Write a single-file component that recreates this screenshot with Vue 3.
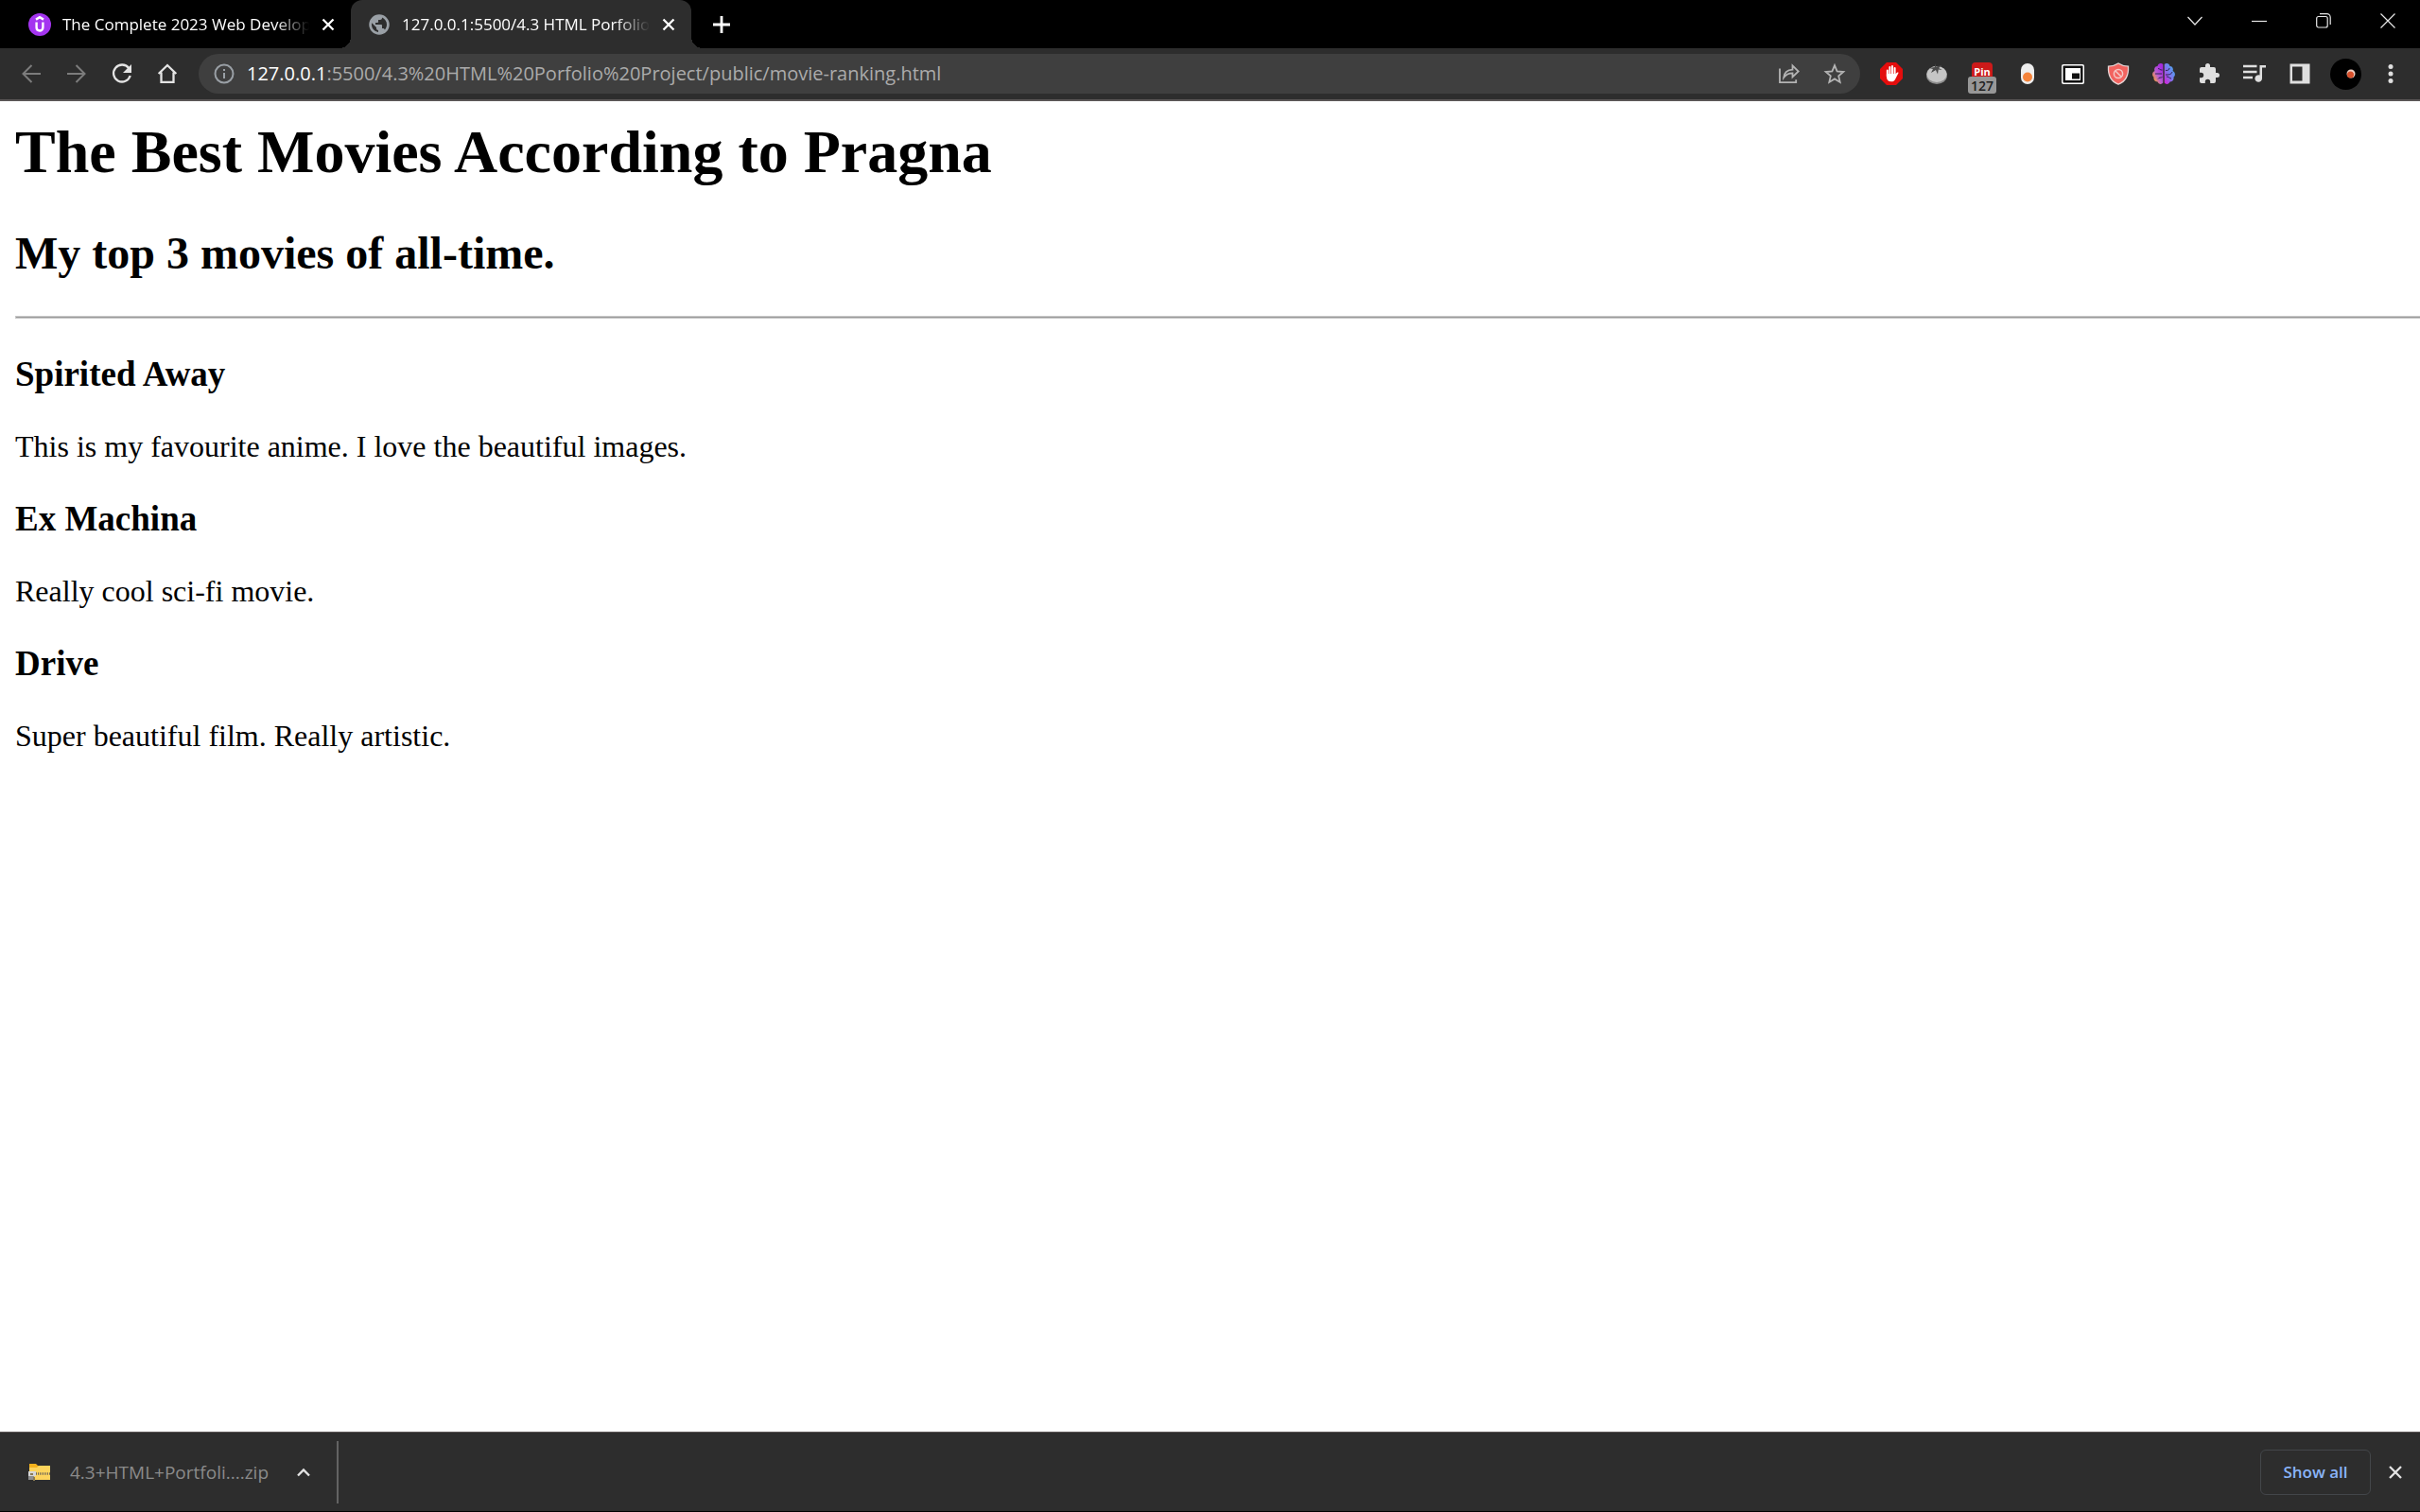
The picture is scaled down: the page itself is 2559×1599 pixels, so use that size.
<script setup>
const tabs = [
  { title: 'The Complete 2023 Web Develop', icon: 'course', active: false },
  { title: '127.0.0.1:5500/4.3 HTML Porfolio', icon: 'globe', active: true },
]
const movies = [
  { title: 'Spirited Away', text: 'This is my favourite anime. I love the beautiful images.' },
  { title: 'Ex Machina', text: 'Really cool sci-fi movie.' },
  { title: 'Drive', text: 'Super beautiful film. Really artistic.' },
]
</script>

<template>
  <div class="browser">
    <header>
      <div class="tabstrip">
        <div v-for="tab in tabs" :key="tab.icon" class="tab" :class="{ active: tab.active }">
          <svg v-if="tab.icon === 'course'" class="favicon" viewBox="0 0 24 24">
            <circle cx="12" cy="12" r="12" fill="#a435f0" />
            <path d="M8 6.600 12 4.200l4 2.400M8.600 9.500v5.500c0 4.600 6.800 4.600 6.800 0V9.500" fill="none" stroke="#fff" stroke-width="2.400" />
          </svg>
          <svg v-else class="favicon" viewBox="0 0 24 24">
            <circle cx="12" cy="12" r="10" fill="none" stroke="#9aa0a6" stroke-width="1.500" />
            <path d="M12 2C6.480 2 2 6.480 2 12s4.480 10 10 10 10-4.480 10-10S17.520 2 12 2zm-1 17.930c-3.950-.490-7-3.850-7-7.930 0-.620.080-1.210.210-1.790L9 15v1c0 1.100.9 2 2 2v1.930zm6.900-2.540c-.260-.810-1-1.390-1.900-1.390h-1v-3c0-.550-.450-1-1-1H8v-2h2c.550 0 1-.450 1-1V7h2c1.100 0 2-.9 2-2v-.410c2.930 1.190 5 4.060 5 7.410 0 2.080-.8 3.970-2.100 5.390z" fill="#9aa0a6" />
          </svg>
          <span class="tab-title">{{ tab.title }}</span>
          <button class="tab-close" aria-label="Close tab">
            <svg width="14" height="14" viewBox="0 0 14 14"><path d="M1.500 1.500l11 11M12.500 1.500l-11 11" stroke="#fff" stroke-width="2.300" /></svg>
          </button>
        </div>
        <button class="new-tab" aria-label="New tab">
          <svg width="18" height="18" viewBox="0 0 18 18"><path d="M9 0v18M0 9h18" stroke="#fff" stroke-width="2.800" /></svg>
        </button>
        <div class="window-controls">
          <button aria-label="Search tabs"><svg width="16" height="16" viewBox="0 0 16 16"><path d="M.5 4 8 12l7.500-8" /></svg></button>
          <button aria-label="Minimize"><svg width="16" height="16" viewBox="0 0 16 16"><path d="M0 8.500h16" /></svg></button>
          <button aria-label="Restore"><svg width="16" height="16" viewBox="0 0 16 16"><rect x=".7" y="3.500" width="11.500" height="11.500" rx="2" /><path d="M4 .7h7.500a3.700 3.700 0 0 1 3.700 3.700V12" /></svg></button>
          <button aria-label="Close"><svg width="16" height="16" viewBox="0 0 16 16"><path d="M.5.5l15 15M15.500.5l-15 15" /></svg></button>
        </div>
      </div>

      <div class="toolbar">
        <nav class="nav">
          <button aria-label="Back"><svg class="dim" viewBox="0 0 24 24"><path d="M22 12H3.500M12.500 3l-9 9 9 9" /></svg></button>
          <button aria-label="Forward"><svg class="dim" viewBox="0 0 24 24"><path d="M2 12h18.500M11.500 3l9 9-9 9" /></svg></button>
          <button aria-label="Reload"><svg viewBox="0 0 24 24"><path d="M19.200 6A9 9 0 1 0 20.700 14" /><path d="M22 2v9h-9z" fill="#e4e4e4" stroke="none" /></svg></button>
          <button aria-label="Home"><svg viewBox="0 0 24 24"><path d="M5.500 10.500v10.300h13V10.500M2.700 12 12 3l9.300 9" /></svg></button>
        </nav>
        <div class="omnibox">
          <svg class="info" viewBox="0 0 24 24"><circle cx="12" cy="12" r="9.500" /><path d="M12 11v6M12 7v2" /></svg>
          <span class="url"><b>127.0.0.1</b>:5500/4.3%20HTML%20Porfolio%20Project/public/movie-ranking.html</span>
          <button aria-label="Share"><svg class="soft" viewBox="0 0 24 24"><path d="M2 6.500V21.200h17.200v-3" /><path d="M6.200 16c.6-5.300 3.600-8 9.300-8.300V3.300L21.700 9.500l-6.200 6v-4.200c-4 0-6.800 1.200-9.300 4.700z" /></svg></button>
          <button aria-label="Bookmark"><svg class="soft" viewBox="0 0 24 24"><path d="M12 3.200l2.600 6.200 6.700.6-5.100 4.400 1.500 6.500-5.700-3.500-5.700 3.500 1.500-6.500L2.700 10l6.700-.6z" /></svg></button>
        </div>
        <div class="extensions">
          <button aria-label="Ad blocker">
            <svg viewBox="0 0 24 24" class="plain"><path d="M7 0h10l7 7v10l-7 7H7l-7-7V7z" fill="#e40d0d" /><path d="M7.800 8.500v6M10.400 5v9M13 4v9M15.600 6v9" stroke="#fff" stroke-width="2" stroke-linecap="round" /><path d="M6.900 12h9.700l1.700-1.500c1-.4 1.500.3 1 1L16 18c-.8 1.500-2 2.300-4 2.300-3.300 0-5.100-2-5.100-5z" fill="#fff" /></svg>
          </button>
          <button aria-label="Pomodoro timer">
            <svg viewBox="0 0 24 24" class="plain"><ellipse cx="12" cy="13.500" rx="11" ry="9.500" fill="#8c8c8c" /><ellipse cx="12" cy="12.500" rx="10.500" ry="8.500" fill="#c6c6c6" /><path d="M10 1l1.200 3.500 6-1.500-3 3 3.500 2-4-.5-.7 5-2-4.500L6 11l2-4-4-1 6-1z" fill="#4a4a4a" /></svg>
          </button>
          <button class="pin" aria-label="Pin counter">
            <span class="pin-icon">Pin</span><span class="badge">127</span>
          </button>
          <button aria-label="Toggle">
            <svg viewBox="0 0 24 24" class="plain"><rect x="5" y="1" width="14" height="22" rx="7" fill="#eee" /><circle cx="12" cy="15.500" r="5" fill="#f5833a" /></svg>
          </button>
          <button aria-label="Picture in picture">
            <svg viewBox="0 0 24 24" class="plain"><rect x="0" y="2" width="24" height="21" rx="2" fill="#fff" /><rect x="1.500" y="3.500" width="21" height="18" rx="1" fill="#111" /><rect x="4" y="6" width="16" height="13" fill="#fff" /><rect x="11" y="11.500" width="8" height="6" fill="#111" /></svg>
          </button>
          <button aria-label="Shield">
            <svg viewBox="0 0 24 24" class="plain"><path d="M12 1c3 2 6.500 3 10.500 3.200C23 13 20 20 12 23.200 4 20 1 13 1.500 4.200 5.500 4 9 3 12 1z" fill="#f2635f" stroke="#e6d6d6" stroke-width="1.300" /><circle cx="12" cy="12" r="4.600" fill="none" stroke="#f4c9c8" stroke-width="1.500" /><path d="M9 9l6 6" stroke="#f4c9c8" stroke-width="1.500" /></svg>
          </button>
          <button aria-label="Brain">
            <svg viewBox="0 0 24 24" class="plain">
              <defs>
                <linearGradient id="brain-left" x1="1" y1="0" x2="0" y2="1"><stop offset=".2" stop-color="#a72be0" /><stop offset=".55" stop-color="#b85fd0" /><stop offset=".85" stop-color="#f7a03c" /></linearGradient>
                <linearGradient id="brain-right" x1="1" y1="0" x2="0" y2="1"><stop offset="0" stop-color="#35b9ee" /><stop offset=".5" stop-color="#7b79ee" /><stop offset="1" stop-color="#d81bd8" /></linearGradient>
              </defs>
              <path d="M11.300 2C9 0 6 1.500 5.500 4 2.500 4 1.500 7 2.500 9-.5 10.500-.5 14 1.500 15.500 1 18.500 3 20.500 5.500 20.500 6.500 23.500 10 23.500 11.300 21.500z" fill="url(#brain-left)" />
              <path d="M12.700 2C15 0 18 1.500 18.500 4c3 0 4 3 3 5 3 1.500 3 5 1 6.500.5 3-1.500 5-4 5-1 3-4.500 3-5.800 1z" fill="url(#brain-right)" />
              <path d="M6 6.500c2 0 2 2 4.500 1.500M3 12h7M6 17.500c1-2 3-1 4.500-2M18 6c0 2-1.500 2.500-4 2.500M21 10c-1 3-4 3-7 3M20 17c-2 0-2-2-5-2" fill="none" stroke="#2f2452" stroke-width="1" />
            </svg>
          </button>
          <button aria-label="Extensions">
            <svg viewBox="0 0 24 24" class="plain"><path d="M20.500 11H19V7a2 2 0 0 0-2-2h-4V3.500a2.500 2.500 0 0 0-5 0V5H4a2 2 0 0 0-2 2v3.800h1.500a2.700 2.700 0 0 1 0 5.400H2V20a2 2 0 0 0 2 2h3.800v-1.500a2.700 2.700 0 0 1 5.400 0V22H17a2 2 0 0 0 2-2v-4h1.500a2.500 2.500 0 0 0 0-5z" fill="#dfdfdf" /></svg>
          </button>
          <button aria-label="Media controls">
            <svg viewBox="0 0 24 24" class="plain"><path d="M0 4h14.500M0 10h14.500M0 16h10" stroke="#dfdfdf" stroke-width="2.300" /><path d="M17.500 3H24v2.500h-4V17a3.800 3.800 0 1 1-2.500-3.500z" fill="#dfdfdf" /></svg>
          </button>
          <button aria-label="Side panel">
            <svg viewBox="0 0 24 24" class="plain"><path d="M1.500 1.500h21v21h-21zM4 4.500v15h10.500v-15z" fill="#dfdfdf" fill-rule="evenodd" /></svg>
          </button>
          <button class="profile" aria-label="Profile">
            <svg viewBox="0 0 33 33"><circle cx="16.500" cy="16.500" r="16.500" fill="#000" stroke="none" /><circle cx="22" cy="16" r="4.500" fill="#f0d0c4" stroke="none" /><circle cx="21.500" cy="17" r="3.500" fill="#d9512c" stroke="none" /></svg>
          </button>
          <button aria-label="Menu">
            <svg viewBox="0 0 24 24" class="plain" fill="#dfdfdf"><circle cx="12" cy="4.500" r="2.500" /><circle cx="12" cy="12" r="2.500" /><circle cx="12" cy="19.500" r="2.500" /></svg>
          </button>
        </div>
      </div>
    </header>

    <main>
      <h1>The Best Movies According to Pragna</h1>
      <h2>My top 3 movies of all-time.</h2>
      <hr />
      <section v-for="movie in movies" :key="movie.title">
        <h3>{{ movie.title }}</h3>
        <p>{{ movie.text }}</p>
      </section>
    </main>

    <footer>
      <svg class="zip" width="24" height="18" viewBox="0 0 24 18"><path d="M1 0h7l2 2h13v15H1z" fill="#f5b21c" /><path d="M1 4h8l2-2h12v15H1z" fill="#fdd45c" /><path d="M8 10.500h15" stroke="#6d6657" stroke-width="2.500" stroke-dasharray="1 1" /><path d="M0 8h6v9H0z" fill="#8f8f8f" /><path d="M0 8h8v5H0z" fill="#d7d7d7" /><path d="M2 10h3v2H2zM5 14h2v4H5z" fill="#8a7b55" /></svg>
      <span class="file">4.3+HTML+Portfoli....zip</span>
      <button class="chevron" aria-label="Download options"><svg width="14" height="10" viewBox="0 0 14 10"><path d="M1 8.500l6-6 6 6" fill="none" stroke="#e4e4e4" stroke-width="2.300" /></svg></button>
      <span class="divider"></span>
      <button class="show-all">Show all</button>
      <button class="shelf-close" aria-label="Close downloads bar"><svg width="14" height="14" viewBox="0 0 14 14"><path d="M1 1l12 12M13 1L1 13" stroke="#e4e4e4" stroke-width="2.300" /></svg></button>
    </footer>
  </div>
</template>

<style>
body {
  margin: 0;
}
</style>

<style scoped>
.browser {
  display: flex;
  flex-direction: column;
  min-height: 100vh;
  background: #fff;
  font-family: "Open Sans", "Noto Sans", sans-serif;
}
button {
  display: flex;
  flex: none;
  align-items: center;
  justify-content: center;
  padding: 0;
  border: 0;
  background: none;
  font-family: inherit;
}
svg {
  display: block;
  flex: none;
}
.tabstrip {
  display: flex;
  height: 51px;
  background: #000;
}
.tab {
  display: flex;
  align-items: center;
  box-sizing: border-box;
  width: 360px;
  padding: 0 16px 0 18px;
  color: #fff;
}
.tab:first-child {
  width: 371px;
  padding-left: 30px;
}
.tab.active {
  position: relative;
  background: #2d2d2d;
  border-radius: 12px 12px 0 0;
}
.tab.active::before,
.tab.active::after {
  content: "";
  position: absolute;
  bottom: 0;
  width: 12px;
  height: 12px;
}
.tab.active::before {
  left: -12px;
  background: radial-gradient(circle at 0 0, transparent 12px, #2d2d2d 12px);
}
.tab.active::after {
  right: -12px;
  background: radial-gradient(circle at 100% 0, transparent 12px, #2d2d2d 12px);
}
.favicon {
  width: 24px;
  height: 24px;
}
.tab-title {
  flex: 1;
  margin: 0 12px;
  overflow: hidden;
  font-size: 17px;
  line-height: 24px;
  white-space: nowrap;
  mask-image: linear-gradient(to left, transparent, #000 36px);
}
.tab-close {
  width: 16px;
  height: 24px;
}
.new-tab {
  width: 64px;
}
.window-controls {
  display: flex;
  margin-left: auto;
  padding-bottom: 8px;
}
.window-controls button {
  width: 68px;
}
.window-controls svg {
  fill: none;
  stroke: #e8e8e8;
  stroke-width: 1.2;
}
.toolbar {
  display: flex;
  align-items: center;
  height: 54px;
  padding-right: 7px;
  background: #2d2d2d;
  border-bottom: 2px solid #5b5656;
}
.toolbar button {
  width: 48px;
  height: 42px;
}
.toolbar svg {
  width: 24px;
  height: 24px;
  fill: none;
  stroke: #e4e4e4;
  stroke-width: 2.3;
}
.toolbar svg.dim {
  stroke: #7c7c7c;
  stroke-width: 2;
}
.toolbar svg.soft {
  stroke: #b4b4b4;
  stroke-width: 1.8;
}
.toolbar svg.plain {
  fill: revert-layer;
  stroke: revert-layer;
  stroke-width: revert-layer;
}
.nav {
  display: flex;
  padding: 0 9px;
}
.omnibox {
  display: flex;
  flex: 1;
  align-items: center;
  height: 42px;
  padding: 0 3px 0 15px;
  border-radius: 21px;
  background: #3f3f3f;
}
.toolbar svg.info {
  stroke: #9aa0a6;
  stroke-width: 2;
}
.url {
  flex: 1;
  margin-left: 12px;
  color: #ababab;
  font-size: 20px;
  line-height: 30px;
  white-space: nowrap;
}
.url b {
  color: #fff;
  font-weight: 400;
}
.extensions {
  display: flex;
  padding-left: 9px;
}
.toolbar .pin {
  position: relative;
}
.pin-icon {
  width: 22px;
  height: 24px;
  border-radius: 4px;
  background: #cc1a1a;
  color: #fff;
  font-size: 11px;
  font-weight: 700;
  line-height: 20px;
}
.badge {
  position: absolute;
  top: 24px;
  left: 9px;
  width: 30px;
  height: 18px;
  border-radius: 3px;
  background: #979797;
  color: #202020;
  font-size: 14px;
  font-weight: 600;
  line-height: 19px;
}
.toolbar .profile svg {
  width: 33px;
  height: 33px;
}
main {
  flex: 1;
  padding: 17px 0 16px 16px;
  color: #000;
  font-family: "Liberation Serif", "Times New Roman", serif;
}
h1,
h2,
h3,
p {
  margin: 0;
}
h1 {
  font-size: 64px;
  line-height: 74px;
}
h2 {
  margin-top: 42px;
  font-size: 48px;
  line-height: 55px;
}
hr {
  height: 1px;
  margin: 39px 0 38px;
  border: solid #c8c8c8;
  border-width: 1px 0 1px 1px;
  background: #9a9a9a;
}
h3 {
  margin-top: 37px;
  font-size: 37px;
  line-height: 42px;
}
p {
  margin-top: 37px;
  font-size: 32px;
  line-height: 37px;
}
footer {
  display: flex;
  align-items: center;
  height: 83px;
  padding: 0 14px 0 30px;
  background: #2d2d2d;
  border-top: 1px solid #5b5656;
  border-bottom: 1px solid #000;
}
.file {
  margin-left: 20px;
  color: #8b8b8b;
  font-size: 19px;
}
.chevron {
  margin-left: 30px;
  height: 40px;
}
.divider {
  width: 2px;
  height: 66px;
  margin-left: 28px;
  background: #636363;
}
.show-all {
  box-sizing: border-box;
  width: 117px;
  height: 48px;
  margin-left: auto;
  border: 1px solid #43464a;
  border-radius: 6px;
  color: #8ab4f8;
  font-size: 17px;
  font-weight: 600;
}
.shelf-close {
  width: 24px;
  height: 24px;
  margin-left: 14px;
}
</style>
